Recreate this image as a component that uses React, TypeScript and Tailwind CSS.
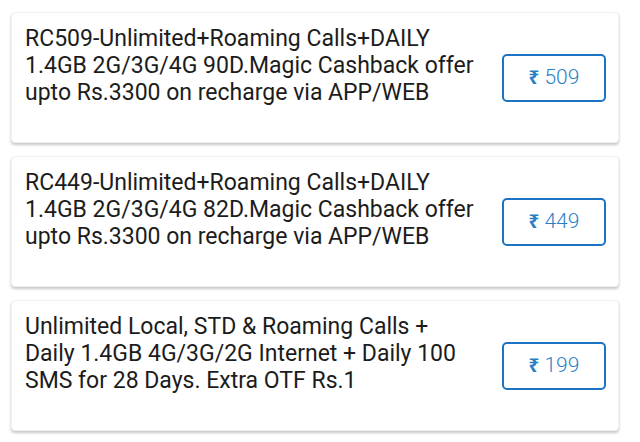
import React from 'react'

interface Plan {
  desc: string
  price: number
}

const plans: Plan[] = [
  {
    desc: 'RC509-Unlimited+Roaming Calls+DAILY 1.4GB 2G/3G/4G 90D.Magic Cashback offer upto Rs.3300 on recharge via APP/WEB',
    price: 509,
  },
  {
    desc: 'RC449-Unlimited+Roaming Calls+DAILY 1.4GB 2G/3G/4G 82D.Magic Cashback offer upto Rs.3300 on recharge via APP/WEB',
    price: 449,
  },
  {
    desc: 'Unlimited Local, STD & Roaming Calls + Daily 1.4GB 4G/3G/2G Internet + Daily 100 SMS for 28 Days. Extra OTF Rs.1',
    price: 199,
  },
]

export default function App() {
  return (
    <div className="w-[640px] h-[442px] bg-white pt-[12px] px-[11px] flex flex-col gap-[13px] font-['Roboto',sans-serif]">
      {plans.map((plan, key) => (
        <PlanCard key={key} plan={plan} />
      ))}
    </div>
  )
}

const PlanCard = ({ plan: { desc, price } }: { plan: Plan }) => {
  return (
    <div className="h-[131px] w-[608px] bg-white rounded-[4px] border border-[#f0f0f0] shadow-[0_2px_3px_rgba(0,0,0,0.22)] flex items-start pl-[13px] pr-[12px]">
      <div className="w-[454px] pt-[12px] text-[23px] leading-[27px] text-[#1c1c1c]">{desc}</div>
      <div className="ml-auto self-center w-[104px] h-[48px] border-2 border-[#1b74c6] rounded-[5px] flex items-center justify-center text-[21px] text-[#2c7fc6]">
        <span className="font-bold mr-[5px] font-['Noto_Sans',sans-serif] text-[19px]">₹</span>
        <span className="font-light">{price}</span>
      </div>
    </div>
  )
}
